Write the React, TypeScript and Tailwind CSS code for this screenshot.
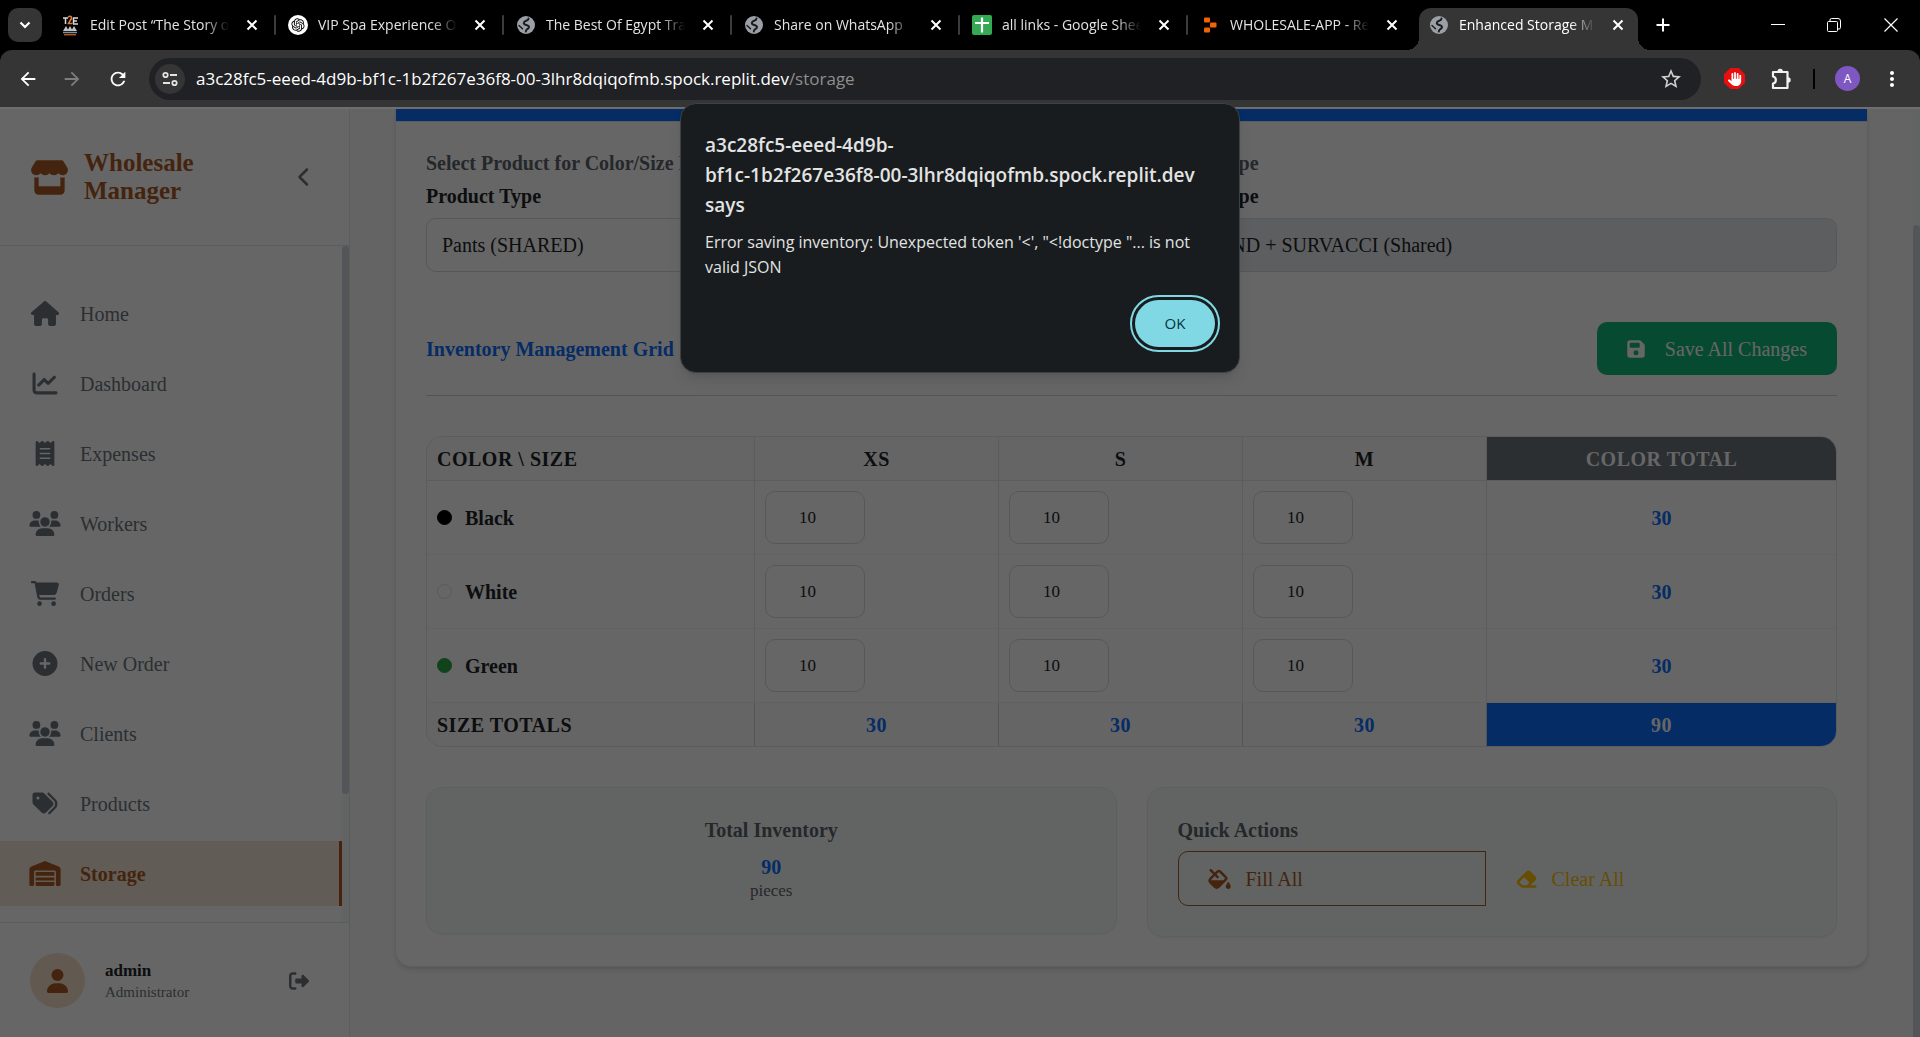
import type { ComponentType, ReactNode } from "react";
import {
  FaCartShopping,
  FaChartLine,
  FaChevronLeft,
  FaCirclePlus,
  FaEraser,
  FaFillDrip,
  FaFloppyDisk,
  FaHand,
  FaHouse,
  FaReceipt,
  FaRightFromBracket,
  FaStore,
  FaTags,
  FaUser,
  FaUsers,
  FaWarehouse,
} from "react-icons/fa6";
import { MdArrowBack, MdArrowForward, MdMoreVert, MdRefresh, MdStarBorder } from "react-icons/md";
import { RiOpenaiFill } from "react-icons/ri";

/* ---------- Browser chrome ---------- */

function GlobeIcon() {
  return (
    <svg viewBox="0 0 18 18" className="size-[18px]" aria-hidden="true">
      <circle cx="9" cy="9" r="9" fill="#9aa0a6" />
      <path
        d="M11.500 2.500C11.500 5.500 7 4 6.800 7c-.1 2.600 5 1.200 5.200 4 .1 2.200-3 1.600-3.200 4.500"
        fill="none"
        stroke="#1b1c1e"
        strokeWidth="2"
        strokeLinecap="round"
      />
      <path d="M2 9.500l3.500 3.200" stroke="#1b1c1e" strokeWidth="1.500" strokeLinecap="round" />
    </svg>
  );
}

function TravelIcon() {
  return (
    <svg viewBox="0 0 18 22" className="h-[22px] w-[18px]" fill="none" aria-hidden="true">
      <path d="M2 4h5M4.500 4v6M12 4h5M12 7h4M12 10h5M12.500 4v6" stroke="#d9d9d9" strokeWidth="1.500" />
      <path d="M7 3.500c1-2 4-1.500 3.500 1L7.500 9.500h4" stroke="#e07b3c" strokeWidth="1.600" />
      <path d="M2 17l3-5 2 3.500L9 12l2 3.500 2-3.500 3 5z" fill="#bfc3c7" />
      <path d="M2 18.500h14" stroke="#8b8f93" strokeWidth="1.500" />
      <path d="M3 20.700h12" stroke="#b65a24" strokeWidth="1.400" />
    </svg>
  );
}

function ChatIcon() {
  return (
    <span className="flex size-5 items-center justify-center rounded-full bg-white">
      <RiOpenaiFill className="size-4 text-black" />
    </span>
  );
}

function SheetsIcon() {
  return (
    <svg viewBox="0 0 20 20" className="size-5" aria-hidden="true">
      <rect width="20" height="20" rx="2" fill="#34a853" />
      <path d="M10 2.500v15M3 8h14" stroke="#fff" strokeWidth="2.200" />
    </svg>
  );
}

function ReplitIcon() {
  return (
    <svg viewBox="0 0 14 16" className="h-4 w-[14px]" fill="#f26207" aria-hidden="true">
      <rect x="1" y="0.500" width="6" height="5" rx="1" />
      <rect x="7" y="5.500" width="6.500" height="5" rx="1" />
      <rect x="1" y="10.500" width="6" height="5" rx="1" />
    </svg>
  );
}

function SiteControlsIcon() {
  return (
    <svg viewBox="0 0 18 18" className="size-[18px]" fill="none" stroke="#e3e3e3" strokeWidth="1.800" aria-hidden="true">
      <circle cx="4.500" cy="5" r="2.200" />
      <path d="M9 5h7M2 13h7" />
      <circle cx="13.500" cy="13" r="2.200" />
    </svg>
  );
}

function CloseIcon() {
  return (
    <svg viewBox="0 0 12 12" className="size-3" stroke="currentColor" strokeWidth="2" aria-hidden="true">
      <path d="M1.500 1.500l9 9M10.500 1.500l-9 9" />
    </svg>
  );
}

function PuzzleIcon() {
  return (
    <svg viewBox="0 0 24 24" className="size-6" fill="none" stroke="#f1f1f1" strokeWidth="2.200" strokeLinejoin="round" aria-hidden="true">
      <path d="M4 5h14.500v16H4v-4.500c3.800-.6 3.800-6.400 0-7z" />
      <path d="M8.500 4.500a2.700 2.700 0 0 1 5.400 0zM19 10.300a2.700 2.700 0 0 1 0 5.400z" fill="#f1f1f1" stroke="none" />
    </svg>
  );
}

const tabs: { title: string; icon: ReactNode }[] = [
  { title: "Edit Post “The Story of Egypt” ‹ Travel", icon: <TravelIcon /> },
  { title: "VIP Spa Experience Options", icon: <ChatIcon /> },
  { title: "The Best Of Egypt Travel Guide", icon: <GlobeIcon /> },
  { title: "Share on WhatsApp", icon: <GlobeIcon /> },
  { title: "all links - Google Sheets", icon: <SheetsIcon /> },
  { title: "WHOLESALE-APP - Replit", icon: <ReplitIcon /> },
];

function TabBody({ title, icon }: { title: string; icon: ReactNode }) {
  return (
    <>
      <span className="flex w-5 shrink-0 items-center justify-center">{icon}</span>
      <span className="min-w-0 flex-1 overflow-hidden whitespace-nowrap [mask-image:linear-gradient(to_right,black_80%,transparent_98%)]">
        {title}
      </span>
      <button aria-label={`Close ${title}`} className="flex size-5 shrink-0 items-center justify-center text-white">
        <CloseIcon />
      </button>
    </>
  );
}

function TabStrip() {
  return (
    <div className="flex h-[50px] shrink-0 bg-black pl-2 text-sm text-[#e3e3e3]">
      <button
        aria-label="Search tabs"
        className="mt-2 mr-1.5 flex size-[34px] shrink-0 items-center justify-center rounded-[10px] bg-[#353535]"
      >
        <svg viewBox="0 0 12 8" className="h-2 w-3" fill="none" stroke="#fff" strokeWidth="2.200" aria-hidden="true">
          <path d="M1.500 1.500L6 6l4.500-4.500" />
        </svg>
      </button>
      {tabs.map((tab, i) => (
        <div key={tab.title} className="flex max-w-[228px] min-w-0 flex-1 items-center">
          <div className="flex min-w-0 flex-1 items-center gap-2.5 pr-3 pl-3">
            <TabBody {...tab} />
          </div>
          <div className={i === tabs.length - 1 ? "h-5 w-0.5" : "h-5 w-0.5 rounded bg-[#3c3c3c]"} />
        </div>
      ))}
      <div className="relative mt-2 ml-[3px] flex max-w-[219px] min-w-0 flex-1 items-center gap-2.5 rounded-t-xl bg-[#353535] pr-2.5 pb-2 pl-2.5 text-white">
        <TabBody title="Enhanced Storage Management" icon={<GlobeIcon />} />
        <div className="absolute bottom-0 -left-3 size-3 bg-[radial-gradient(circle_at_0_0,transparent_12px,#353535_12px)]" />
        <div className="absolute -right-3 bottom-0 size-3 bg-[radial-gradient(circle_at_100%_0,transparent_12px,#353535_12px)]" />
      </div>
      <button aria-label="New tab" className="ml-4 flex h-[50px] w-[18px] shrink-0 items-center justify-center">
        <svg viewBox="0 0 14 14" className="size-3.5" stroke="#fff" strokeWidth="2" aria-hidden="true">
          <path d="M7 0.500v13M0.500 7h13" />
        </svg>
      </button>
      <div className="ml-auto flex">
        <button aria-label="Minimize" className="flex w-14 items-center justify-center">
          <svg viewBox="0 0 14 14" className="size-3.5" stroke="#fff" aria-hidden="true">
            <path d="M0 6.500h14" />
          </svg>
        </button>
        <button aria-label="Restore" className="flex w-14 items-center justify-center">
          <svg viewBox="0 0 14 14" className="size-3.5" fill="none" stroke="#fff" aria-hidden="true">
            <rect x="0.500" y="3.500" width="10" height="10" rx="1" />
            <path d="M3 3.500V2a1.500 1.500 0 0 1 1.500-1.500H11A2.500 2.500 0 0 1 13.500 3v6.500A1.500 1.500 0 0 1 12 11h-1.500" />
          </svg>
        </button>
        <button aria-label="Close window" className="flex w-[58px] items-center justify-center">
          <svg viewBox="0 0 14 14" className="size-3.5" stroke="#fff" strokeWidth="1.200" aria-hidden="true">
            <path d="M0.500 0.500l13 13M13.500 0.500l-13 13" />
          </svg>
        </button>
      </div>
    </div>
  );
}

function Toolbar() {
  return (
    <div className="shrink-0 bg-black">
      <div className="flex h-[57px] items-center rounded-t-xl bg-[#353535] pl-[17px] text-white">
        <button aria-label="Back" className="flex w-[22px] justify-center">
          <MdArrowBack className="size-[22px]" />
        </button>
        <button aria-label="Forward" className="ml-[22px] flex w-[22px] justify-center text-[#7d7d7d]">
          <MdArrowForward className="size-[22px]" />
        </button>
        <button aria-label="Reload" className="ml-6 flex w-[22px] justify-center">
          <MdRefresh className="size-[22px]" />
        </button>
        <div className="ml-5 flex h-[42px] min-w-0 flex-1 items-center rounded-full bg-[#202124] pr-[18px] pl-1.5">
          <button
            aria-label="View site information"
            className="flex size-[30px] shrink-0 items-center justify-center rounded-full bg-[#353535]"
          >
            <SiteControlsIcon />
          </button>
          <div className="ml-[11px] min-w-0 flex-1 truncate text-[17px]">
            a3c28fc5-eeed-4d9b-bf1c-1b2f267e36f8-00-3lhr8dqiqofmb.spock.replit.dev
            <span className="text-[#8e8e8e]">/storage</span>
          </div>
          <button aria-label="Bookmark this tab" className="text-[#d0d0d0]">
            <MdStarBorder className="size-6" />
          </button>
        </div>
        <button aria-label="Ad blocker" className="relative ml-[23px] flex size-[21px] items-center justify-center">
          <svg viewBox="0 0 20 20" className="absolute inset-0 size-[21px]" fill="#e90f0f" aria-hidden="true">
            <path d="M6 0h8l6 6v8l-6 6H6l-6-6V6z" />
          </svg>
          <FaHand className="relative size-3.5" />
        </button>
        <button aria-label="Extensions" className="ml-6">
          <PuzzleIcon />
        </button>
        <div className="ml-5 h-5 w-0.5 bg-black" />
        <button
          aria-label="Profile"
          className="ml-5 flex size-[25px] items-center justify-center rounded-full bg-[#7e57c2] text-xs"
        >
          A
        </button>
        <button aria-label="Menu" className="mr-4 ml-5">
          <MdMoreVert className="size-6" />
        </button>
      </div>
    </div>
  );
}

/* ---------- Sidebar ---------- */

const nav: { label: string; icon: ComponentType<{ className?: string }>; active?: boolean }[] = [
  { label: "Home", icon: FaHouse },
  { label: "Dashboard", icon: FaChartLine },
  { label: "Expenses", icon: FaReceipt },
  { label: "Workers", icon: FaUsers },
  { label: "Orders", icon: FaCartShopping },
  { label: "New Order", icon: FaCirclePlus },
  { label: "Clients", icon: FaUsers },
  { label: "Products", icon: FaTags },
  { label: "Storage", icon: FaWarehouse, active: true },
];

function Sidebar() {
  return (
    <aside className="flex w-[350px] shrink-0 flex-col border-r border-[#e3e6e8] bg-white">
      <div className="flex h-[137px] shrink-0 items-center border-b border-[#e3e6e8] pr-[38px] pl-[30px] text-[#ac5a26]">
        <FaStore className="h-[35px] w-[39px] shrink-0" />
        <h1 className="ml-[15px] flex-1 text-[25px] leading-7 font-bold">
          Wholesale
          <br />
          Manager
        </h1>
        <button aria-label="Collapse sidebar" className="text-[#6c757d]">
          <FaChevronLeft className="h-5 w-[13px]" />
        </button>
      </div>
      <div className="flex min-h-0 flex-1">
        <nav className="flex min-w-0 flex-1 flex-col gap-[5px] overflow-hidden pt-[35px] text-xl">
          {nav.map(({ label, icon: Icon, active }) => (
            <a
              key={label}
              href="#"
              className={
                active
                  ? "flex h-[65px] shrink-0 items-center gap-5 border-r-[3px] border-[#ac5a26] bg-[#f4e7d7] pl-[30px] font-bold text-[#ac5a26]"
                  : "flex h-[65px] shrink-0 items-center gap-5 pl-[30px] text-[#6c757d]"
              }
            >
              <span className="flex w-[30px] justify-center">
                <Icon className="h-[25px] w-8 shrink-0" />
              </span>
              {label}
            </a>
          ))}
        </nav>
        <div className="w-[7px] bg-[#f5f8f7]">
          <div className="h-[81%] rounded-full bg-[#d1d5db]" />
        </div>
      </div>
      <div className="flex shrink-0 items-center border-t border-[#e3e6e8] pt-[30px] pr-10 pb-[29px] pl-[30px]">
        <div className="flex size-[55px] items-center justify-center rounded-full bg-[#f4e0c9] text-[#ac5a26]">
          <FaUser className="h-6 w-[21px]" />
        </div>
        <div className="ml-5 flex-1">
          <div className="text-[17px] leading-[22px] font-bold text-[#212529]">admin</div>
          <div className="text-[15px] leading-5 text-[#6c757d]">Administrator</div>
        </div>
        <button aria-label="Log out" className="text-[#6c757d]">
          <FaRightFromBracket className="size-5" />
        </button>
      </div>
    </aside>
  );
}

/* ---------- Inventory ---------- */

const sizes = ["XS", "S", "M"];
const colors = [
  { name: "Black", dot: "border-black bg-black", counts: [10, 10, 10] },
  { name: "White", dot: "border-[#dee2e6] bg-white", counts: [10, 10, 10] },
  { name: "Green", dot: "border-[#28a745] bg-[#28a745]", counts: [10, 10, 10] },
];

function sum(values: number[]) {
  return values.reduce((a, b) => a + b, 0);
}

function InventoryTable() {
  const columnTotals = sizes.map((_, i) => sum(colors.map((c) => c.counts[i])));
  return (
    <div className="mt-10 overflow-hidden rounded-2xl border border-[#e3e6e9]">
      <table className="w-full table-fixed border-separate border-spacing-0 text-xl leading-6">
        <colgroup>
          <col className="w-[328px]" />
          <col className="w-[244px]" />
          <col className="w-[244px]" />
          <col className="w-[244px]" />
          <col />
        </colgroup>
        <thead>
          <tr className="h-11 tracking-wide text-[#212529]">
            <th className="border-r border-b border-[#e3e6e9] bg-[#fcfcfd] px-2.5 text-left">COLOR \ SIZE</th>
            {sizes.map((s) => (
              <th key={s} className="border-r border-b border-[#e3e6e9] bg-[#fcfcfd] px-2.5 text-center">
                {s}
              </th>
            ))}
            <th className="border-b border-[#e3e6e9] bg-[#6c757d] px-2.5 text-center text-white">COLOR TOTAL</th>
          </tr>
        </thead>
        <tbody>
          {colors.map((c) => (
            <tr key={c.name} className="h-[74px]">
              <th className="border-r border-b border-r-[#e3e6e9] border-b-[#f3f5f6] px-2.5 text-left text-[#212529]">
                <span className="flex items-center gap-[13px]">
                  <span className={`size-[15px] rounded-full border ${c.dot}`} />
                  {c.name}
                </span>
              </th>
              {c.counts.map((n, i) => (
                <td key={sizes[i]} className="border-r border-b border-r-[#e3e6e9] border-b-[#f3f5f6] px-2.5">
                  <input
                    type="number"
                    aria-label={`${c.name} ${sizes[i]}`}
                    defaultValue={n}
                    className="block h-[53px] w-[100px] rounded-[10px] border border-[#d6dadf] bg-white px-3 text-center text-[17px] text-[#212529]"
                  />
                </td>
              ))}
              <td className="border-b border-[#f3f5f6] text-center font-bold text-[#0d6efd]">{sum(c.counts)}</td>
            </tr>
          ))}
        </tbody>
        <tfoot>
          <tr className="h-[43px] font-bold tracking-wide">
            <th className="border-r border-[#ced4da] bg-[#fcfcfd] px-2.5 text-left text-[#212529]">SIZE TOTALS</th>
            {columnTotals.map((t, i) => (
              <td key={sizes[i]} className="border-r border-[#ced4da] bg-[#fcfcfd] text-center text-[#0d6efd]">
                {t}
              </td>
            ))}
            <td className="bg-[#0d6efd] text-center text-white">{sum(columnTotals)}</td>
          </tr>
        </tfoot>
      </table>
    </div>
  );
}

function InventoryPage() {
  return (
    <main className="flex min-w-0 flex-1 bg-[#fafbfb]">
      <div className="min-w-0 flex-1 px-[45px]">
        <section className="overflow-hidden rounded-b-2xl border-x border-b border-[#e6e9eb] bg-white shadow-md">
          <div className="h-[13px] border-b border-[#e3e6e9] bg-[#0d6efd]" />
          <div className="px-[30px] py-[29px] text-xl leading-6">
            <div className="grid grid-cols-2 gap-[30px]">
              <div>
                <div className="font-bold text-[#5c646b]">Select Product for Color/Size Inventory</div>
                <label htmlFor="product" className="mt-[9px] mb-2.5 block font-bold text-[#212529]">
                  Product Type
                </label>
                <select
                  id="product"
                  className="block h-[54px] w-full appearance-none rounded-[10px] border border-[#d6dadf] bg-white px-[15px] text-[#212529]"
                >
                  <option>Pants (SHARED)</option>
                </select>
              </div>
              <div>
                <div className="font-bold text-[#5c646b]">Storage Type</div>
                <label htmlFor="storage" className="mt-[9px] mb-2.5 block font-bold text-[#212529]">
                  Storage Type
                </label>
                <input
                  id="storage"
                  readOnly
                  value="DIAMOND + SURVACCI (Shared)"
                  className="block h-[54px] w-full rounded-[10px] border border-[#d6dadf] bg-[#e9ecef] px-4 text-[#212529]"
                />
              </div>
            </div>

            <div className="mt-[50px] flex items-center justify-between border-b border-[#ced4da] pb-5">
              <h2 className="font-bold text-[#0d6efd]">Inventory Management Grid</h2>
              <button className="flex h-[53px] items-center gap-5 rounded-[10px] bg-[#10b97d] px-[30px] text-white">
                <FaFloppyDisk className="h-5 w-[18px]" />
                Save All Changes
              </button>
            </div>

            <InventoryTable />

            <div className="mt-10 grid grid-cols-2 items-start gap-[30px]">
              <div className="rounded-2xl border border-[#e8eeeb] bg-[#f6fbf9] p-[30px] text-center shadow-xs">
                <h3 className="font-bold text-[#5c646b]">Total Inventory</h3>
                <div className="mt-[13px] font-bold text-[#0d6efd]">{sum(colors.flatMap((c) => c.counts))}</div>
                <div className="text-[17px] leading-6 text-[#5c646b]">pieces</div>
              </div>
              <div className="rounded-2xl border border-[#e8eeeb] bg-[#f6fbf9] p-[30px] shadow-xs">
                <h3 className="font-bold text-[#5c646b]">Quick Actions</h3>
                <div className="mt-[9px] flex">
                  <button className="flex h-[55px] flex-auto items-center gap-[15px] rounded-l-[10px] border border-[#ac5a26] px-[29px] text-[#ac5a26]">
                    <FaFillDrip className="h-5 w-[23px]" />
                    Fill All
                  </button>
                  <button className="flex h-[55px] flex-auto items-center gap-3.5 px-[29px] text-[#ffc107]">
                    <FaEraser className="h-5 w-[23px]" />
                    Clear All
                  </button>
                </div>
              </div>
            </div>
          </div>
        </section>
      </div>
      <div className="w-[7px] bg-[#f5f8f7] pt-[116px]">
        <div className="h-full rounded-t-full bg-[#d1d5db]" />
      </div>
    </main>
  );
}

function AlertDialog() {
  return (
    <div
      role="alertdialog"
      aria-labelledby="alert-title"
      aria-describedby="alert-message"
      className="absolute top-[103px] left-1/2 w-[560px] -translate-x-1/2 rounded-2xl border border-[#3b4345] bg-[#181c1e] px-6 pt-[26px] pb-[25px] text-[#e3e3e3] shadow-lg"
    >
      <h2 id="alert-title" className="text-[19px] leading-[30px] font-semibold">
        a3c28fc5-eeed-4d9b-
        <br />
        bf1c-1b2f267e36f8-00-3lhr8dqiqofmb.spock.replit.dev
        <br />
        says
      </h2>
      <p id="alert-message" className="mt-2.5 pr-5 text-base leading-[25px]">
        Error saving inventory: Unexpected token '&lt;', "&lt;!doctype "... is not valid JSON
      </p>
      <div className="mt-5 flex justify-end">
        <button className="h-[47px] w-20 rounded-full bg-[#80d8e4] text-[15px] font-medium text-[#00363d] outline-2 outline-offset-[3px] outline-[#80d8e4]">
          OK
        </button>
      </div>
    </div>
  );
}

export default function App() {
  return (
    <div className="relative flex h-screen flex-col overflow-hidden font-['Open_Sans','Noto_Sans',sans-serif]">
      <TabStrip />
      <Toolbar />
      <div className="h-0.5 shrink-0 bg-[#6e6e6e]" />
      <div className="relative flex min-h-0 flex-1 font-['Liberation_Serif',serif]">
        <Sidebar />
        <InventoryPage />
        <div className="absolute inset-0 bg-black/60" />
      </div>
      <AlertDialog />
    </div>
  );
}
